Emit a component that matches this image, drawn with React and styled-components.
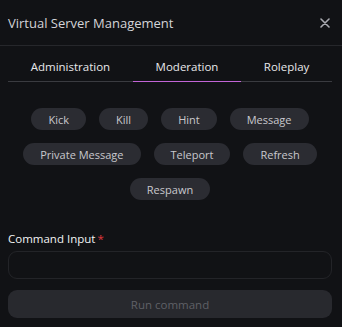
import React, { useState } from "react";
import styled, { createGlobalStyle } from "styled-components";

const GlobalStyle = createGlobalStyle`
  html, body {
    margin: 0;
    padding: 0;
    background: #111215;
  }
  * {
    box-sizing: border-box;
  }
`;

const actions = [
  "Kick",
  "Kill",
  "Hint",
  "Message",
  "Private Message",
  "Teleport",
  "Refresh",
  "Respawn",
];

const tabs = ["Administration", "Moderation", "Roleplay"];

function App() {
  const [active, setActive] = useState("Moderation");
  const [command, setCommand] = useState("");

  return (
    <Modal>
      <GlobalStyle />
      <Header>
        <Title>Virtual Server Management</Title>
        <CloseButton aria-label="Close">
          <svg width="10" height="10" viewBox="0 0 10 10">
            <path
              d="M1 1L9 9M9 1L1 9"
              stroke="#a9aab0"
              strokeWidth="1.6"
              strokeLinecap="round"
            />
          </svg>
        </CloseButton>
      </Header>
      <Body>
        <Tabs>
          {tabs.map((t) => (
            <Tab key={t} $active={t === active} onClick={() => setActive(t)}>
              {t}
            </Tab>
          ))}
        </Tabs>
        <Actions>
          {actions.map((a) => (
            <Pill key={a}>{a}</Pill>
          ))}
        </Actions>
        <Field>
          <Label>
            Command Input<Required>*</Required>
          </Label>
          <Input value={command} onChange={(e) => setCommand(e.target.value)} />
        </Field>
        <RunButton disabled={!command}>Run command</RunButton>
      </Body>
    </Modal>
  );
}

export default App;

const Modal = styled.div`
  width: 342px;
  height: 327px;
  background: #111215;
  font-family: "Open Sans", "Noto Sans", sans-serif;
  color: #e4e4e7;
  display: flex;
  flex-direction: column;
`;

const Header = styled.header`
  height: 46px;
  padding: 0 10px 0 8px;
  display: flex;
  align-items: center;
  justify-content: space-between;
  border-bottom: 1px solid #26272b;
`;

const Title = styled.h2`
  margin: 0;
  font-size: 13px;
  font-weight: 400;
  color: #d4d4d8;
`;

const CloseButton = styled.button`
  background: none;
  border: 0;
  padding: 0;
  width: 14px;
  height: 14px;
  display: flex;
  align-items: center;
  justify-content: center;
  cursor: pointer;
`;

const Body = styled.div`
  padding: 10px 10px 0 8px;
  display: flex;
  flex-direction: column;
`;

const Tabs = styled.nav`
  display: flex;
  border-bottom: 1px solid #3a3b40;
`;

const Tab = styled.button`
  flex: 1 1 auto;
  background: none;
  border: 0;
  padding: 0 0 5px;
  margin-bottom: -1px;
  height: 26px;
  font-family: inherit;
  font-size: 11.5px;
  color: #e8e8ea;
  cursor: pointer;
  border-bottom: 1px solid ${(p) => (p.$active ? "#c264d6" : "transparent")};
`;

const Actions = styled.div`
  display: flex;
  flex-wrap: wrap;
  justify-content: center;
  gap: 13px 13px;
  padding: 0 14px;
  margin-top: 26px;
`;

const Pill = styled.button`
  height: 22px;
  padding: 0 17px;
  border: 0;
  border-radius: 11px;
  background: #2b2c32;
  color: #c8c8cd;
  font-family: inherit;
  font-size: 11px;
  cursor: pointer;
`;

const Field = styled.div`
  margin-top: 31px;
  display: flex;
  flex-direction: column;
  gap: 5px;
`;

const Label = styled.label`
  font-size: 11.5px;
  color: #f2f2f4;
  display: flex;
  gap: 2px;
`;

const Required = styled.span`
  color: #e0383e;
`;

const Input = styled.input`
  height: 28px;
  border: 1px solid #232428;
  border-radius: 9px;
  background: #111215;
  color: #e4e4e7;
  padding: 0 10px;
  outline: none;
  font-family: inherit;
`;

const RunButton = styled.button`
  margin-top: 11px;
  height: 28px;
  border: 0;
  border-radius: 9px;
  background: #28292e;
  color: #5f6066;
  font-family: inherit;
  font-size: 11.5px;
`;
